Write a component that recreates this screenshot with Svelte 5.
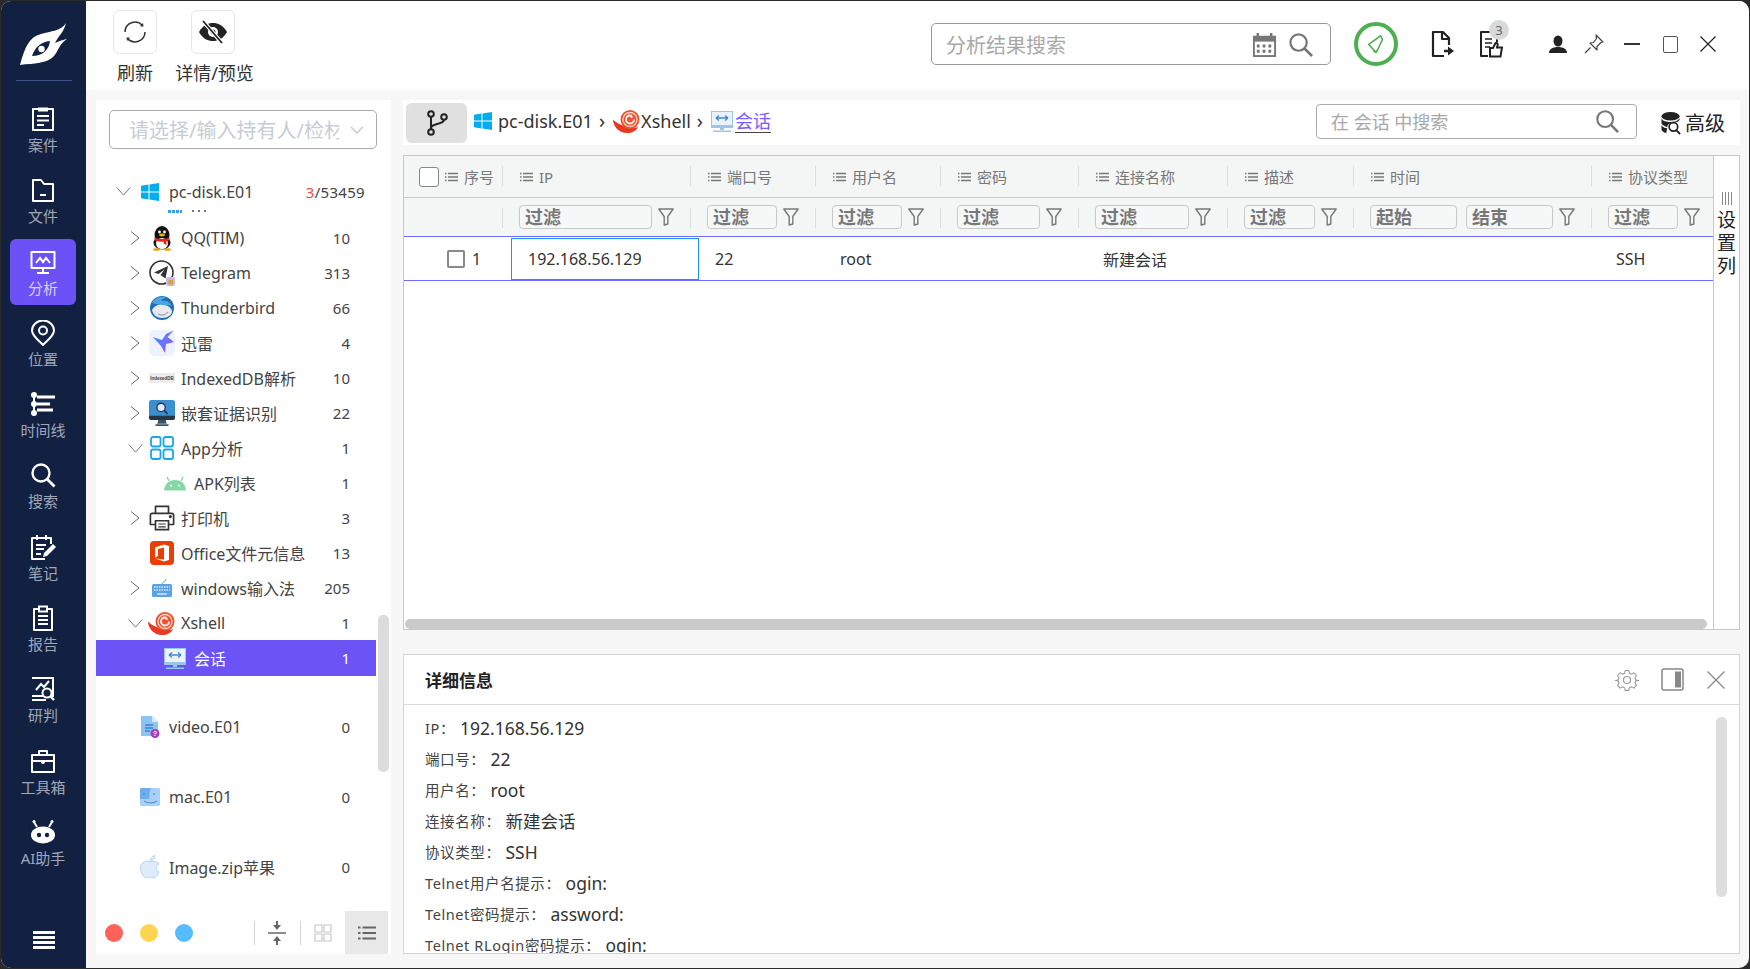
<script>
  const navItems = [
    { key: 'case', label: '案件' },
    { key: 'file', label: '文件' },
    { key: 'analysis', label: '分析', active: true },
    { key: 'location', label: '位置' },
    { key: 'timeline', label: '时间线' },
    { key: 'search', label: '搜索' },
    { key: 'note', label: '笔记' },
    { key: 'report', label: '报告' },
    { key: 'judge', label: '研判' },
    { key: 'tool', label: '工具箱' },
    { key: 'ai', label: 'AI助手' }
  ];

  const treeRows = [
    { icon: 'qq', name: 'QQ(TIM)', count: 10, lvl: 1, chev: 'right' },
    { icon: 'telegram', name: 'Telegram', count: 313, lvl: 1, chev: 'right' },
    { icon: 'thunderbird', name: 'Thunderbird', count: 66, lvl: 1, chev: 'right' },
    { icon: 'xunlei', name: '迅雷', count: 4, lvl: 1, chev: 'right' },
    { icon: 'indexeddb', name: 'IndexedDB解析', count: 10, lvl: 1, chev: 'right' },
    { icon: 'nested', name: '嵌套证据识别', count: 22, lvl: 1, chev: 'right' },
    { icon: 'app', name: 'App分析', count: 1, lvl: 1, chev: 'down' },
    { icon: 'android', name: 'APK列表', count: 1, lvl: 2 },
    { icon: 'printer', name: '打印机', count: 3, lvl: 1, chev: 'right' },
    { icon: 'office', name: 'Office文件元信息', count: 13, lvl: 1 },
    { icon: 'keyboard', name: 'windows输入法', count: 205, lvl: 1, chev: 'right' },
    { icon: 'xshell', name: 'Xshell', count: 1, lvl: 1, chev: 'down' },
    { icon: 'session', name: '会话', count: 1, lvl: 2, selected: true }
  ];

  const disks = [
    { icon: 'video', name: 'video.E01', count: 0 },
    { icon: 'mac', name: 'mac.E01', count: 0 },
    { icon: 'apple', name: 'Image.zip苹果', count: 0 }
  ];

  const headers = [
    { label: '序号', first: true },
    { label: 'IP', filters: ['过滤'] },
    { label: '端口号', filters: ['过滤'] },
    { label: '用户名', filters: ['过滤'] },
    { label: '密码', filters: ['过滤'] },
    { label: '连接名称', filters: ['过滤'] },
    { label: '描述', filters: ['过滤'] },
    { label: '时间', filters: ['起始', '结束'] },
    { label: '协议类型', filters: ['过滤'], last: true }
  ];

  const cells = ['192.168.56.129', '22', 'root', '', '新建会话', '', '', 'SSH'];

  const details = [
    ['IP', '192.168.56.129'],
    ['端口号', '22'],
    ['用户名', 'root'],
    ['连接名称', '新建会话'],
    ['协议类型', 'SSH'],
    ['Telnet用户名提示', 'ogin:'],
    ['Telnet密码提示', 'assword:'],
    ['Telnet RLogin密码提示', 'ogin:']
  ];
</script>

{#snippet navIcon(k)}
  <svg class="nav-svg" viewBox="0 0 26 26" fill="none" stroke="#fff" stroke-width="2">
    {#if k === 'case'}
      <path d="M3 3h20v21H3z" stroke-linejoin="round" />
      <path d="M8 1.500h10v4H8z" fill="#fff" stroke="none" />
      <path d="M7 10h12M7 14.500h12M7 19h7" />
    {:else if k === 'file'}
      <path d="M3 3h8l3 4h9v17H3z" stroke-linejoin="round" />
      <path d="M10 18h6" />
    {:else if k === 'analysis'}
      <path d="M1.500 3h23v16h-23z" stroke-linejoin="round" />
      <path d="M6 14l4-5 3 4 3-4 4 5M13 19v4M7 24h12" />
    {:else if k === 'location'}
      <path d="M13 25C6 18 2 15 2 10.500a11 10 0 0 1 22 0C24 15 20 18 13 25z" />
      <circle cx="13" cy="10.500" r="4" />
    {:else if k === 'timeline'}
      <path d="M4 2v22" />
      <circle cx="4" cy="4" r="2" fill="#fff" /><circle cx="4" cy="13" r="2" fill="#fff" /><circle cx="4" cy="22" r="2" fill="#fff" />
      <path d="M7 6h18M7 13h13M7 19h16" stroke-width="3" />
    {:else if k === 'search'}
      <circle cx="11" cy="11" r="8.500" stroke-width="2.400" />
      <path d="M17 17l7.500 7.500" stroke-width="2.800" />
    {:else if k === 'note'}
      <path d="M21 10V4H2v21h13" stroke-linejoin="round" />
      <path d="M7 1v5M16 1v5M6 11h10M6 15h8M6 20h5" />
      <path d="M13 23l1-4L23 10l3 3-9 9z" fill="#fff" stroke="none" />
    {:else if k === 'report'}
      <path d="M4 4h18v21H4z" stroke-linejoin="round" />
      <path d="M9 1.500h8v5H9z" fill="#122142" />
      <path d="M8 11h10M8 15h10M8 19h10" />
    {:else if k === 'judge'}
      <path d="M2 2h21v18H2M2 24h14" />
      <path d="M6 14l5-6 3 3 5-6" />
      <circle cx="17" cy="17" r="4.500" fill="#122142" />
      <path d="M20 20l4 4" stroke-width="2.400" />
    {:else if k === 'tool'}
      <path d="M2 7h22v17H2zM9 7V3h8v4M2 13h22" stroke-linejoin="round" />
      <circle cx="13" cy="14" r="2" fill="#fff" stroke="none" />
    {:else if k === 'ai'}
      <ellipse cx="13" cy="16" rx="12" ry="8.500" fill="#fff" stroke="none" />
      <circle cx="9" cy="16" r="2.200" fill="#122142" stroke="none" />
      <circle cx="17" cy="16" r="2.200" fill="#122142" stroke="none" />
      <path d="M7 8L4 3M19 8l3-5" />
      <circle cx="4" cy="2.500" r="1.500" fill="#fff" stroke="none" /><circle cx="22" cy="2.500" r="1.500" fill="#fff" stroke="none" />
    {/if}
  </svg>
{/snippet}

{#snippet treeIcon(k)}
  {#if k === 'win'}
    <svg viewBox="0 0 18 18" class="i18"><path fill="#00adef" d="M0 2.700 7.500 1.600V8.500H0zM8.500 1.400 18 0V8.500H8.500zM0 9.500H7.500V16.400L0 15.300zM8.500 9.500H18V18L8.500 16.600z" /></svg>
  {:else if k === 'qq'}
    <svg viewBox="0 0 26 26" class="i26">
      <ellipse cx="13" cy="10" rx="7.500" ry="9" fill="#111" />
      <ellipse cx="13" cy="18" rx="8.500" ry="6.500" fill="#111" />
      <ellipse cx="13" cy="18.500" rx="6" ry="5.500" fill="#fff" />
      <circle cx="10.500" cy="7" r="1.400" fill="#fff" /><circle cx="15.500" cy="7" r="1.400" fill="#fff" />
      <ellipse cx="13" cy="10" rx="3" ry="1.400" fill="#f5b400" />
      <path d="M5.500 12.500c5 2 10 2 15 0v2.500l-3 1v4l-3-1.500v-2c-4 .5-7 0-9-1.500z" fill="#e9251d" />
      <ellipse cx="7.500" cy="24.500" rx="3.500" ry="1.300" fill="#e9a100" /><ellipse cx="18.500" cy="24.500" rx="3.500" ry="1.300" fill="#e9a100" />
    </svg>
  {:else if k === 'telegram'}
    <svg viewBox="0 0 26 26" class="i26">
      <circle cx="12.500" cy="12.500" r="11.500" fill="#fff" stroke="#333" stroke-width="1.600" />
      <path d="M19 6 5 12.500l4.500 1.500 6-4.500-4 5.500 5 3.500z" fill="#333" />
      <rect x="17" y="17" width="9" height="9" rx="2" fill="#c8b8f0" /><rect x="19.500" y="20" width="4.500" height="4.500" fill="#d7a62b" />
    </svg>
  {:else if k === 'thunderbird'}
    <svg viewBox="0 0 26 26" class="i26">
      <circle cx="13" cy="13" r="12" fill="#1f6fb5" />
      <path d="M3 8C6 2 12 1 18 2c-3 1-5 2-6 4 5-1 9 1 11 5-3-1-5-1-7 0z" fill="#4da4e0" />
      <path d="M3 15c2-4 6-6 10-5 5 0 9 2 10 6 0 4-4 7-10 7-5 0-9-3-10-8z" fill="#e8e8ee" />
      <path d="M9 19c3 2 8 1 10-2" fill="none" stroke="#9aa3b5" stroke-width="1.200" />
    </svg>
  {:else if k === 'xunlei'}
    <svg viewBox="0 0 26 26" class="i26">
      <defs><linearGradient id="xl" x1="0" y1="0" x2="1" y2="1"><stop offset="0" stop-color="#2d9cff" /><stop offset="1" stop-color="#a64dff" /></linearGradient></defs>
      <rect width="26" height="26" rx="5" fill="#eef1fe" />
      <path d="M24.500 .5 18.500 7 25 12l-8 2-1 9-4-7-8-9 9 3 4-6z" fill="url(#xl)" />
    </svg>
  {:else if k === 'indexeddb'}
    <svg viewBox="0 0 26 10" class="iw26"><rect width="26" height="10" fill="#ececec" /><text x="13" y="7" text-anchor="middle" font-size="4.500" font-family="Liberation Sans, sans-serif" font-weight="700" fill="#444">IndexedDB</text></svg>
  {:else if k === 'nested'}
    <svg viewBox="0 0 28 28" class="i26">
      <rect x="0" y="0" width="28" height="21" rx="2.500" fill="#3a8fd0" />
      <path d="M0 17h28v2.500a2 2 0 0 1-2 2H2a2 2 0 0 1-2-2z" fill="#263645" />
      <path d="M10 21.500h8l1 4H9zM7 26h14v2H7z" fill="#36556b" />
      <circle cx="13" cy="8" r="4.500" fill="#dfeefa" stroke="#263645" stroke-width="1.400" />
      <path d="M16 11l4 4" stroke="#263645" stroke-width="1.800" />
    </svg>
  {:else if k === 'app'}
    <svg viewBox="0 0 24 24" class="i24" fill="none" stroke="#18a6ee" stroke-width="1.800">
      <rect x="1" y="1" width="9.500" height="9.500" rx="2" /><rect x="13.500" y="1" width="9.500" height="9.500" rx="2" />
      <rect x="1" y="13.500" width="9.500" height="9.500" rx="2" /><rect x="13.500" y="13.500" width="9.500" height="9.500" rx="2" />
    </svg>
  {:else if k === 'android'}
    <svg viewBox="0 0 22 16" class="iw22">
      <path d="M0 15.500C.5 9 5 5 11 5s10.500 4 11 10.500z" fill="#85d8a5" />
      <path d="M5 6 3 2M17 6l2-4" stroke="#85d8a5" stroke-width="1.400" />
      <circle cx="7" cy="10.500" r="1.100" fill="#fff" /><circle cx="15" cy="10.500" r="1.100" fill="#fff" />
    </svg>
  {:else if k === 'printer'}
    <svg viewBox="0 0 28 28" class="i26" fill="none" stroke="#333" stroke-width="1.800">
      <path d="M7 9V1.500h14V9M7 21H1.500V11a2 2 0 0 1 2-2h21a2 2 0 0 1 2 2v10H21" stroke-linejoin="round" />
      <path d="M7 17h14v9.500H7z" /><path d="M10 20.500h8M10 23.500h8" stroke-width="1.200" />
      <circle cx="23" cy="12.500" r=".8" fill="#333" />
    </svg>
  {:else if k === 'office'}
    <svg viewBox="0 0 24 24" class="i24">
      <rect width="24" height="24" rx="4" fill="#ea3e04" />
      <path d="M5 6.500 14 3.500l5 1.500v14l-5 1.500-9-3 9 1V6.500l-6 1.500v7l-3 1.500z" fill="#fff" />
    </svg>
  {:else if k === 'keyboard'}
    <svg viewBox="0 0 20 18" class="iw20">
      <path d="M10 5c0-2 2-1.500 3-3l1-2" stroke="#5aa2e8" stroke-width="1" fill="none" />
      <rect y="5" width="20" height="13" rx="1.500" fill="#5aa2e8" />
      <path d="M2 8h16M2 11h16" stroke="#d7e8fa" stroke-width="1.300" stroke-dasharray="1.500 1" />
      <path d="M5 15h10" stroke="#d7e8fa" stroke-width="1.500" />
    </svg>
  {:else if k === 'xshell'}
    <svg viewBox="0 0 28 23" class="iw28" fill="none">
      <path d="M0 9.500c0 7 6 13.500 14 13.500 5 0 9-2 11-6-5 1.500-10 1-14-1C6 14 2 12 0 9.500z" fill="#e63a24" />
      <circle cx="17" cy="9.500" r="9.500" fill="#f0512f" />
      <circle cx="17" cy="9.500" r="7" stroke="#fbd0bd" stroke-width="1.400" />
      <path d="M21 9.500a4 4 0 1 1-4-4c1.500 0 2 1 1.500 2.500" stroke="#fff" stroke-width="1.800" />
    </svg>
  {:else if k === 'session'}
    <svg viewBox="0 0 22 21" class="iw22">
      <rect x=".5" y=".5" width="21" height="14" fill="#eaf3fb" stroke="#9cc6ea" />
      <path d="M5 7h12M5 7l3-2.500M5 7l3 2.500M17 7l-3-2.500M17 7l-3 2.500" stroke="#3f8ccc" stroke-width="1.300" fill="none" />
      <path d="M0 15h22v2H0z" fill="#9cc6ea" />
      <path d="M9 17h4v2H9zM2 19.500h18V21H2z" fill="#9cc6ea" />
    </svg>
  {:else if k === 'video'}
    <svg viewBox="0 0 20 22" class="iw20">
      <path d="M1 0h11l6 6v14H1z" fill="#8dc3f5" /><path d="M12 0l6 6h-6z" fill="#d4e8fb" />
      <path d="M5 9h8M5 12h8M5 15h5" stroke="#3d83cf" stroke-width="1.500" />
      <circle cx="15" cy="17.500" r="4.500" fill="#a83cbf" />
      <text x="15" y="20" text-anchor="middle" font-size="6.500" font-weight="700" fill="#fff" font-family="Liberation Sans, sans-serif">?</text>
    </svg>
  {:else if k === 'mac'}
    <svg viewBox="0 0 20 18" class="iw20">
      <rect width="20" height="18" rx="1.500" fill="#a8d0f7" />
      <path d="M0 1.500A1.500 1.500 0 0 1 1.500 0H11C9 5 9 9 9.500 11H0z" fill="#6eaef0" />
      <path d="M4 5v2M14 5v2M4 13c4 2.500 9 2.500 13 0" stroke="#3d83cf" stroke-width="1" fill="none" />
    </svg>
  {:else if k === 'apple'}
    <svg viewBox="0 0 20 24" class="iw20">
      <path d="M10 7C7 5 1 6 .5 12.500.5 18 4 23 6.500 23c1.500 0 2-1 3.500-1s2 1 3.500 1c2 0 4-2.500 5.500-6-3-1.500-3.500-6.500 0-8-1.500-2.500-6-3-9-2z" fill="#dcecfb" stroke="#a9cdef" stroke-width=".8" />
      <path d="M10 6.500C10 3.500 12 1 15 .5c0 3-2 5.500-5 6z" fill="#dcecfb" stroke="#a9cdef" stroke-width=".8" />
    </svg>
  {/if}
{/snippet}

{#snippet searchGlass(size)}
  <svg viewBox="0 0 26 26" width={size} height={size} fill="none" stroke="#777" stroke-width="2.300">
    <circle cx="11" cy="11" r="8.500" /><path d="M17 17l8 8" stroke-width="2.800" />
  </svg>
{/snippet}

{#snippet listIcon()}
  <svg class="list-ic" viewBox="0 0 13 10" fill="none" stroke="#777" stroke-width="1.300">
    <path d="M0 1.500h1.500M0 5h1.500M0 8.500h1.500M3 1.500h10M3 5h10M3 8.500h10" />
  </svg>
{/snippet}

{#snippet funnel()}
  <svg class="funnel" viewBox="0 0 16 18" fill="none" stroke="#777" stroke-width="1.400"><path d="M.8 1h14.400L9.800 8.500v7.500l-3.600 1V8.500z" stroke-linejoin="round" /></svg>
{/snippet}

<div class="window">
  <div class="frame">
    <aside class="sidebar">
      <div class="logo">
        <svg viewBox="0 0 48 42" width="48" height="42">
          <path d="M46 0C41 8 31 8 21 11 9 14 5 24 0 42c14-2 27-1 34-9 5-6 5-12 13-17-6 1-9 3-12 4 4-8 9-11 11-20z" fill="#fff" />
          <path d="M12 33c3-9 9-14 18-15-1 9-8 15-18 15z" fill="#122142" />
          <circle cx="21.500" cy="26" r="3.200" fill="#fff" />
        </svg>
      </div>
      <nav class="nav">
        {#each navItems as n}
          <div class="nav-item" class:active={n.active}>
            {@render navIcon(n.key)}
            <span>{n.label}</span>
          </div>
        {/each}
      </nav>
      <div class="burger"><i></i><i></i><i></i><i></i></div>
    </aside>

    <div class="content">
      <header class="topbar">
        <div class="tool t1">
          <div class="tool-btn">
            <svg viewBox="0 0 24 24" width="24" height="24" fill="none" stroke="#333" stroke-width="1.500">
              <path d="M2 12A10 10 0 0 1 19.500 5.500" /><path d="M22 12A10 10 0 0 1 4.500 18.500" />
              <path d="M17 6.500h3.500L20 3zM7 17.500H3.500L4 21z" fill="#333" stroke="none" />
            </svg>
          </div>
          <span>刷新</span>
        </div>
        <div class="tool t2">
          <div class="tool-btn">
            <svg viewBox="0 0 28 24" width="28" height="24">
              <path d="M0 12C4 5 9 3 14 3s10 2 14 9c-4 7-9 9-14 9S4 19 0 12z" fill="#222" />
              <circle cx="14" cy="12" r="5" fill="#fff" /><circle cx="14" cy="12" r="2.500" fill="#222" />
              <path d="M4 1l19 22" stroke="#fff" stroke-width="4" /><path d="M4 1l19 22" stroke="#222" stroke-width="1.800" />
            </svg>
          </div>
          <span>详情/预览</span>
        </div>
        <div class="top-right">
          <div class="search-main">
            <span class="ph">分析结果搜索</span>
            <svg viewBox="0 0 26 26" width="25" height="25">
              <path d="M1 4h24v22H1z" fill="#777" /><path d="M6 1v5M20 1v5" stroke="#777" stroke-width="2.500" />
              <rect x="3" y="10" width="20" height="14" fill="#fff" />
              <path d="M5 13h3v3H5zM11 13h3v3h-3zM17 13h3v3h-3zM5 18.500h3v3H5zM11 18.500h3v3h-3zM17 18.500h3v3h-3z" fill="#777" />
            </svg>
            {@render searchGlass(25)}
          </div>
          <div class="green">
            <svg viewBox="0 0 24 24" width="22" height="22" fill="none" stroke="#4caf50" stroke-width="1.700" stroke-linejoin="round">
              <path d="M17 3 6 11l-2 1.500 8 8.500 2-3 5-11z" /><path d="M9 19c1 2 3 2 4 1" />
            </svg>
          </div>
          <svg class="export" viewBox="0 0 24 28" width="24" height="28" fill="none" stroke="#222" stroke-width="2.200">
            <path d="M14 26H3V2h10l6 6v7M12 2v7h7" stroke-linejoin="round" />
            <path d="M14 21h6" stroke-width="2.400" /><path d="M18 16.500 24 21l-6 4.500z" fill="#222" stroke="none" />
          </svg>
          <div class="doc">
            <svg viewBox="0 0 24 28" width="24" height="28" fill="none" stroke="#222" stroke-width="2">
              <path d="M9 26H2V2h12l4 5v5" stroke-linejoin="round" /><path d="M6 9h7M6 13h7M6 17h5" stroke-width="1.500" />
              <path d="M11 18h3l2.500-5c2-.5 2.500 1 2 2.500l-.5 2h5l-1.500 9H11z" />
            </svg>
            <b class="badge">3</b>
          </div>
          <svg class="user" viewBox="0 0 18 18" width="18" height="18"><ellipse cx="9" cy="6" rx="4.500" ry="5.500" fill="#222" /><path d="M0 18c0-4 4-6 9-6s9 2 9 6z" fill="#222" /></svg>
          <svg class="pin" viewBox="0 0 20 20" width="20" height="20" fill="none" stroke="#444" stroke-width="1.200" stroke-linejoin="round">
            <path d="M12 1l7 7-2 .5-4 4 0 3.500-7-7 3.500-.5 3-4z" /><path d="M6.500 13.500 1 19" />
          </svg>
          <span class="win-btn"><span class="w-min"></span></span>
          <span class="win-btn"><span class="w-max"></span></span>
          <svg class="win-close" viewBox="0 0 16 16" width="16" height="16" stroke="#222" stroke-width="1.200"><path d="M.5.5l15 15M15.500.5l-15 15" /></svg>
        </div>
      </header>

      <div class="workspace">
        <section class="tree">
          <div class="select">
            <span class="select-text">请选择/输入持有人/检材</span>
            <svg viewBox="0 0 14 8" width="14" height="8" fill="none" stroke="#c4c7cf" stroke-width="1.300"><path d="M1 1l6 6 6-6" /></svg>
          </div>
          <div class="tree-scroll">
            <div class="row lvl0">
              <span class="chev"><svg viewBox="0 0 16 10" width="15" height="9" fill="none" stroke="#666" stroke-width="1"><path d="M.5.5 8 9 15.500.5" /></svg></span>
              <span class="ti">{@render treeIcon('win')}</span>
              <span class="name">pc-disk.E01</span>
              <span class="count wide"><em>3</em>/53459</span>
            </div>
            <div class="sliver"><span class="s1"></span><span class="s2"></span></div>
            {#each treeRows as r}
              <div class="row lvl{r.lvl}" class:selected={r.selected}>
                {#if r.lvl < 2}
                  <span class="chev">
                    {#if r.chev === 'right'}
                      <svg viewBox="0 0 10 14" width="10" height="14" fill="none" stroke="#666" stroke-width="1"><path d="M1 .5 9 7 1 13.500" /></svg>
                    {:else if r.chev === 'down'}
                      <svg viewBox="0 0 16 10" width="15" height="9" fill="none" stroke="#666" stroke-width="1"><path d="M.5.5 8 9 15.500.5" /></svg>
                    {/if}
                  </span>
                {/if}
                <span class="ti">{@render treeIcon(r.icon)}</span>
                <span class="name">{r.name}</span>
                <span class="count">{r.count}</span>
              </div>
            {/each}
            <div class="disks">
              {#each disks as d}
                <div class="row lvl0 disk">
                  <span class="chev"></span>
                  <span class="ti">{@render treeIcon(d.icon)}</span>
                  <span class="name">{d.name}</span>
                  <span class="count">{d.count}</span>
                </div>
              {/each}
            </div>
            <div class="tree-thumb"></div>
          </div>
          <footer class="tree-foot">
            <span class="dot red"></span><span class="dot yellow"></span><span class="dot blue"></span>
            <span class="sep first"></span>
            <svg class="compress" viewBox="0 0 18 24" width="18" height="24" fill="#666">
              <path d="M0 11.200h18v1.600H0zM8 0h2v4h3L9 9 5 4h3zM9 15l4 5h-3v4H8v-4H5z" />
            </svg>
            <span class="sep"></span>
            <svg class="grid-ic" viewBox="0 0 18 18" width="18" height="18" fill="none" stroke="#c8c8c8" stroke-width="1.200">
              <path d="M1 1h7v7H1zM10 1h7v7h-7zM1 10h7v7H1zM10 10h7v7h-7z" />
            </svg>
            <span class="list-active">
              <svg viewBox="0 0 18 14" width="18" height="14" fill="none" stroke="#666" stroke-width="2"><path d="M0 1.500h2.500M0 7h2.500M0 12.500h2.500M4.500 1.500H18M4.500 7H18M4.500 12.500H18" /></svg>
            </span>
          </footer>
        </section>

        <section class="main">
          <div class="crumbs">
            <div class="branch">
              <svg viewBox="0 0 22 26" width="22" height="26" fill="none" stroke="#222" stroke-width="2">
                <circle cx="5" cy="4" r="2.800" /><circle cx="5" cy="22" r="2.800" /><circle cx="18" cy="7" r="2.800" />
                <path d="M5 7v12M5 18c0-5 12-3 13-8" />
              </svg>
            </div>
            <span class="cr-ic win">{@render treeIcon('win')}</span>
            <span class="cr-text">pc-disk.E01</span>
            <span class="cr-sep">›</span>
            <span class="cr-ic">{@render treeIcon('xshell')}</span>
            <span class="cr-text">Xshell</span>
            <span class="cr-sep">›</span>
            <span class="cr-ic">{@render treeIcon('session')}</span>
            <span class="cr-link">会话</span>
            <div class="search-sub">
              <span class="ph sm">在 会话 中搜索</span>
              {@render searchGlass(24)}
            </div>
            <div class="advanced">
              <svg viewBox="0 0 22 24" width="21" height="24">
                <ellipse cx="10" cy="5" rx="9.500" ry="4.500" fill="#222" />
                <path d="M.5 7v5c0 2 3 3 6 4.500 0-3 2-4 5-5 3 0 6 0 8-3V7c-2 3-5 4-9.500 4S1.500 10 .5 7zM.5 14v5c1 2 3 3 5 3.500l1-5c-3-.5-5-1.500-6-3.500z" fill="#222" />
                <circle cx="13" cy="16" r="4.500" fill="#fff" stroke="#222" stroke-width="1.800" /><path d="M16 19.500l4 4" stroke="#222" stroke-width="2" />
              </svg>
              <span>高级</span>
            </div>
          </div>

          <div class="table">
            <div class="t-area">
              <div class="h-row">
                {#each headers as h}
                  <div class="h-cell" class:first={h.first} class:last={h.last}>
                    {#if h.first}<span class="h-check"></span>{/if}
                    {@render listIcon()}
                    <span>{h.label}</span>
                  </div>
                {/each}
              </div>
              <div class="f-row">
                {#each headers as h}
                  <div class="f-cell" class:last={h.last}>
                    {#if h.filters}
                      {#each h.filters as f}<span class="f-input">{f}</span>{/each}
                      {@render funnel()}
                    {/if}
                  </div>
                {/each}
              </div>
              <div class="b-row">
                <div class="b-cell b-first"><span class="b-check"></span><span>1</span></div>
                {#each cells as c, i}
                  <div class="b-cell" class:picked={i === 0}>{c}</div>
                {/each}
              </div>
              <div class="t-bar"><span></span></div>
            </div>
            <div class="setcol">
              <span class="bars"><i></i><i></i><i></i><i></i></span>
              <span>设</span><span>置</span><span>列</span>
            </div>
          </div>

          <div class="detail">
            <div class="d-head">
              <strong>详细信息</strong>
              <svg class="gear" viewBox="0 0 24 24" width="24" height="24" fill="none" stroke="#999" stroke-width="1.200" stroke-linejoin="round">
                <circle cx="12" cy="12" r="3.500" />
                <path d="M10 1.500h4l.7 3 2.300 1 2.700-1.500 2.800 3-1.600 2.600.9 2.400 3 .5v0l-3 .5-.9 2.400 1.600 2.600-2.800 3-2.700-1.500-2.300 1-.7 3h-4l-.7-3-2.300-1-2.700 1.500-2.800-3 1.600-2.600-.9-2.400-3-.5 3-.5.900-2.400L1.500 7l2.800-3L7 5.500l2.300-1z" transform="translate(1.200 1.200) scale(.9)" />
              </svg>
              <svg class="panel" viewBox="0 0 23 23" width="23" height="23">
                <rect x="1" y="1" width="21" height="21" rx="2" fill="none" stroke="#888" stroke-width="1.500" />
                <rect x="14" y="3.500" width="6" height="16" fill="#888" />
              </svg>
              <svg class="d-close" viewBox="0 0 18 18" width="18" height="18" stroke="#888" stroke-width="1.300"><path d="M.5.5l17 17M17.500.5l-17 17" /></svg>
            </div>
            <div class="d-body">
              {#each details as d}
                <div class="d-row"><span class="d-label">{d[0]}：</span><span class="d-val">{d[1]}</span></div>
              {/each}
              <div class="d-thumb"></div>
            </div>
          </div>
        </section>
      </div>
    </div>
  </div>
</div>

<style>
  :global(body) { margin: 0; background: #2b2b2b; }
  .window {
    width: 1750px; height: 969px; box-sizing: border-box; padding: 1px; overflow: hidden;
    background: #2b2b2b;
    font-family: "Noto Sans", "Noto Sans CJK SC", sans-serif;
  }
  .frame {
    display: flex; height: 967px; border-radius: 10px; overflow: hidden; background: #f7f7f7;
  }

  /* sidebar */
  .sidebar { width: 85px; flex: none; background: #122142; display: flex; flex-direction: column; align-items: center; }
  .logo {
    width: 56px; height: 80px; box-sizing: border-box; padding-top: 22px; display: flex; justify-content: center;
    border-bottom: 1px solid #3f4f8a; flex: none;
  }
  .nav { margin-top: 15px; margin-right: 1px; display: flex; flex-direction: column; gap: 5.300px; width: 66px; }
  .nav-item {
    height: 66px; border-radius: 6px; display: flex; flex-direction: column; align-items: center;
    box-sizing: border-box; padding-top: 10px; gap: 3px; color: #a0a7b8; font-size: 15px; line-height: 20px;
  }
  .nav-item.active { background: #6c52f6; color: #d6cffc; }
  .nav-svg { width: 26px; height: 26px; flex: none; }
  .burger { margin-top: auto; margin-bottom: 19px; width: 22px; display: flex; flex-direction: column; gap: 2px; }
  .burger i { display: block; height: 3px; background: #fff; }

  .content { flex: 1; min-width: 0; display: flex; flex-direction: column; }

  /* top bar */
  .topbar { height: 89px; flex: none; background: #fff; display: flex; padding: 9px 33px 0 27px; box-sizing: border-box; }
  .tool { display: flex; flex-direction: column; align-items: center; font-size: 18px; color: #333; line-height: 24px; white-space: nowrap; }
  .tool-btn {
    width: 44px; height: 44px; flex: none; box-sizing: border-box; border: 1px solid #e6e6e6; border-radius: 6px;
    display: flex; align-items: center; justify-content: center; margin-bottom: 7px;
  }
  .t2 { margin-left: 19px; width: 77px; }
  .t2 .tool-btn { margin-right: 4px; }
  .top-right { margin-left: auto; margin-top: 13px; height: 42px; display: flex; align-items: center; }
  .search-main {
    width: 400px; height: 42px; box-sizing: border-box; border: 1px solid #999; border-radius: 5px;
    display: flex; align-items: center; padding: 0 17px 0 14px; gap: 11px;
  }
  .ph { color: #a8a8a8; font-size: 20px; flex: 1; }
  .ph.sm { font-size: 18px; }
  .green {
    width: 44px; height: 44px; box-sizing: border-box; border: 4px solid #4caf50; border-radius: 50%;
    margin-left: 23px; display: flex; align-items: center; justify-content: center;
  }
  .export { margin-left: 32px; }
  .doc { position: relative; width: 24px; height: 28px; margin-left: 25px; }
  .badge {
    position: absolute; left: 10px; top: -10px; width: 20px; height: 20px; border-radius: 50%; background: #d9d9d9;
    color: #666; font-size: 13px; font-weight: 400; line-height: 20px; text-align: center;
  }
  .user { margin-left: 46px; }
  .pin { margin-left: 17px; }
  .win-btn { width: 20px; height: 20px; margin-left: 18px; display: flex; align-items: center; justify-content: center; }
  .w-min { width: 16px; height: 2px; background: #333; }
  .w-max { width: 15px; height: 17px; border: 1px solid #555; border-radius: 2px; box-sizing: border-box; }
  .win-close { margin-left: 20px; }

  /* workspace */
  .workspace { flex: 1; min-height: 0; display: flex; gap: 12px; padding: 10px 9px 14px 10px; }

  /* tree */
  .tree { width: 295px; flex: none; background: #fff; display: flex; flex-direction: column; }
  .select {
    margin: 10px 14px 0 13px; height: 39px; box-sizing: border-box; border: 1px solid #aaa; border-radius: 5px; flex: none;
    display: flex; align-items: center; padding: 0 12px 0 19px; gap: 11px;
  }
  .select-text { flex: 1; min-width: 0; overflow: hidden; white-space: nowrap; color: #c8ccd4; font-size: 20px; }
  .tree-scroll { flex: 1; min-height: 0; margin-top: 25px; position: relative; overflow: hidden; }
  .row { height: 35px; width: 280px; display: flex; align-items: center; font-size: 16px; color: #444; box-sizing: border-box; padding-right: 26px; white-space: nowrap; }
  .name { margin-left: 6px; }
  .count { margin-left: auto; color: #444; font-size: 15px; }
  .count.wide { margin-right: -15px; letter-spacing: .3px; }
  .count em { font-style: normal; color: #f24a4a; }
  .chev { width: 18px; flex: none; display: flex; align-items: center; justify-content: center; }
  .ti { width: 26px; height: 26px; flex: none; display: flex; align-items: center; justify-content: center; margin-left: 5px; }
  .lvl0 { padding-left: 18px; }
  .lvl0 .ti { width: 20px; margin-left: 8px; }
  .lvl0 .name { margin-left: 9px; }
  .lvl1 { padding-left: 30px; }
  .lvl2 { padding-left: 61px; }
  .row.selected { background: #6b53f5; color: #fff; height: 36.500px; margin-top: -1px; padding-top: 1px; }
  .row.selected .count { color: #fff; }
  .disks { margin-top: 16px; }
  .row.disk { height: 70px; }
  .sliver { height: 11.500px; display: flex; gap: 10px; padding: 1px 0 0 72px; box-sizing: border-box; }
  .s1 { width: 14px; height: 3px; background: repeating-linear-gradient(90deg, #3d9be9 0 3px, #fff 3px 4px); }
  .s2 { width: 14px; height: 2px; background: repeating-linear-gradient(90deg, #777 0 2px, #fff 2px 6px); }
  .i18 { width: 18px; height: 18px; }
  .i24 { width: 24px; height: 24px; }
  .i26 { width: 26px; height: 26px; }
  .iw28 { width: 28px; height: auto; flex: none; }
  .iw26 { width: 26px; height: auto; }
  .iw22 { width: 22px; height: auto; }
  .iw20 { width: 20px; height: auto; }
  .tree-thumb { position: absolute; left: 282px; top: 441px; width: 11px; height: 157px; border-radius: 5px; background: #dcdcdc; }
  .tree-foot { height: 43px; flex: none; display: flex; align-items: center; padding-left: 9px; }
  .dot { width: 18px; height: 18px; border-radius: 50%; margin-right: 17px; flex: none; }
  .red { background: #ff6259; }
  .yellow { background: #ffd54f; }
  .blue { background: #57bbff; }
  .sep { width: 1px; height: 24px; background: #d4d4d4; flex: none; }
  .sep.first { margin-left: 44px; }
  .compress { margin: 0 14px 0 13px; flex: none; }
  .grid-ic { margin-left: 13px; flex: none; }
  .list-active { margin-left: 13px; width: 43px; height: 43px; background: #e8e8e8; display: flex; align-items: center; justify-content: center; flex: none; }

  /* main */
  .main { width: 1337px; flex: none; display: flex; flex-direction: column; }
  .crumbs { height: 45px; flex: none; background: #fff; display: flex; align-items: center; padding-left: 3px; font-size: 18px; color: #333; margin-bottom: 10px; }
  .branch { width: 61px; height: 40px; background: #e0e0e0; border-radius: 6px; display: flex; align-items: center; justify-content: center; flex: none; }
  .cr-ic { display: flex; align-items: center; flex: none; margin-bottom: 3px; }
  .cr-text, .cr-sep { margin-bottom: 3px; }
  .cr-ic.win { margin-left: 7px; margin-right: 6px; }
  .cr-sep { margin-left: 6px; margin-right: 8px; font-size: 20px; line-height: 20px; }
  .cr-link { color: #7c5cff; border-bottom: 1px solid #444; margin-left: 2px; margin-bottom: 3px; line-height: 22px; }
  .search-sub {
    margin-left: auto; width: 321px; height: 35px; box-sizing: border-box; border: 1px solid #aaa; border-radius: 4px;
    display: flex; align-items: center; padding: 0 17px 0 14px; margin-bottom: 3px;
  }
  .advanced { display: flex; align-items: center; gap: 3px; margin: 0 15px 0 24px; font-size: 20px; color: #222; }

  /* table */
  .table { height: 475px; flex: none; box-sizing: border-box; border: 1px solid #c8c8c8; background: #fff; display: flex; }
  .t-area { width: 1309px; flex: none; display: flex; flex-direction: column; overflow: hidden; }
  .h-row, .f-row, .b-row { display: grid; grid-template-columns: 99px 188px 125px 125px 138px 149px 126px 238px 121px; flex: none; }
  .h-row { height: 41px; background: #f4f6f6; border-bottom: 1px solid #c8c8c8; }
  .h-cell { position: relative; display: flex; align-items: center; gap: 6px; padding-left: 17px; font-size: 15px; color: #777; }
  .h-cell.first { padding-left: 15px; }
  .h-check { width: 20px; height: 20px; box-sizing: border-box; border: 1px solid #888; border-radius: 3px; background: #fff; flex: none; }
  .list-ic { width: 13px; height: 10px; flex: none; }
  .h-cell::after, .f-cell::after { content: ""; position: absolute; right: 0; top: 10px; height: 20px; width: 1px; background: #dcdcdc; }
  .f-row { height: 38px; background: #f4f6f6; }
  .f-cell { position: relative; display: flex; align-items: center; gap: 9px; padding: 0 17px 0 16px; }
  .f-cell.last { padding-right: 13px; }
  .h-cell.last::after, .f-cell.last::after { display: none; }
  .f-input {
    flex: 1; min-width: 0; height: 24px; box-sizing: border-box; border: 1px solid #c8c8c8; border-radius: 4px; background: #f6f7f7;
    font-size: 18px; line-height: 22px; font-weight: 700; color: #777; padding-left: 5px;
  }
  .funnel { width: 16px; height: 18px; flex: none; margin-left: -3px; }
  .b-row {
    height: 45px; box-sizing: border-box; padding-left: 8px; border-top: 1px solid #6a6cff; border-bottom: 1px solid #6a6cff;
    font-size: 16px; color: #333; width: 1317px;
  }
  .b-cell { display: flex; align-items: center; padding-left: 16px; white-space: nowrap; }
  .b-first { padding-left: 35px; gap: 7px; }
  .b-check { width: 18px; height: 18px; box-sizing: border-box; border: 2px solid #888; border-radius: 2px; flex: none; }
  .picked { border: 1px solid #1e90ff; margin-top: 1px; }
  .t-bar { margin-top: auto; height: 10px; padding: 0 6px 0 1px; }
  .t-bar span { display: block; height: 10px; border-radius: 5px; background: #cacaca; }
  .setcol {
    flex: 1; border-left: 1px solid #c8c8c8; display: flex; flex-direction: column; align-items: center;
    padding-top: 36px; font-size: 19px; line-height: 23px; color: #222;
  }
  .bars { display: flex; gap: 2px; height: 13px; margin-bottom: 4px; }
  .bars i { width: 1px; background: #888; }

  /* detail */
  .detail { margin-top: 24px; height: 300px; flex: none; box-sizing: border-box; border: 1px solid #d4d4d4; background: #fff; display: flex; flex-direction: column; }
  .d-head { height: 49px; flex: none; border-bottom: 1px solid #d9d9d9; display: flex; align-items: center; padding: 0 14px 0 21px; }
  .d-head strong { font-size: 17px; color: #222; margin-right: auto; }
  .panel { margin-left: 22px; }
  .d-close { margin-left: 23px; }
  .d-body { flex: 1; min-height: 0; overflow: hidden; padding: 7px 0 0 21px; position: relative; }
  .d-row { height: 31px; display: flex; align-items: center; white-space: nowrap; color: #333; }
  .d-label { font-size: 14.500px; letter-spacing: .6px; color: #444; }
  .d-val { font-size: 17.500px; color: #333; margin-left: 5px; }
  .d-thumb { position: absolute; right: 12px; top: 12px; width: 11px; height: 180px; border-radius: 5px; background: #dedede; }
</style>
